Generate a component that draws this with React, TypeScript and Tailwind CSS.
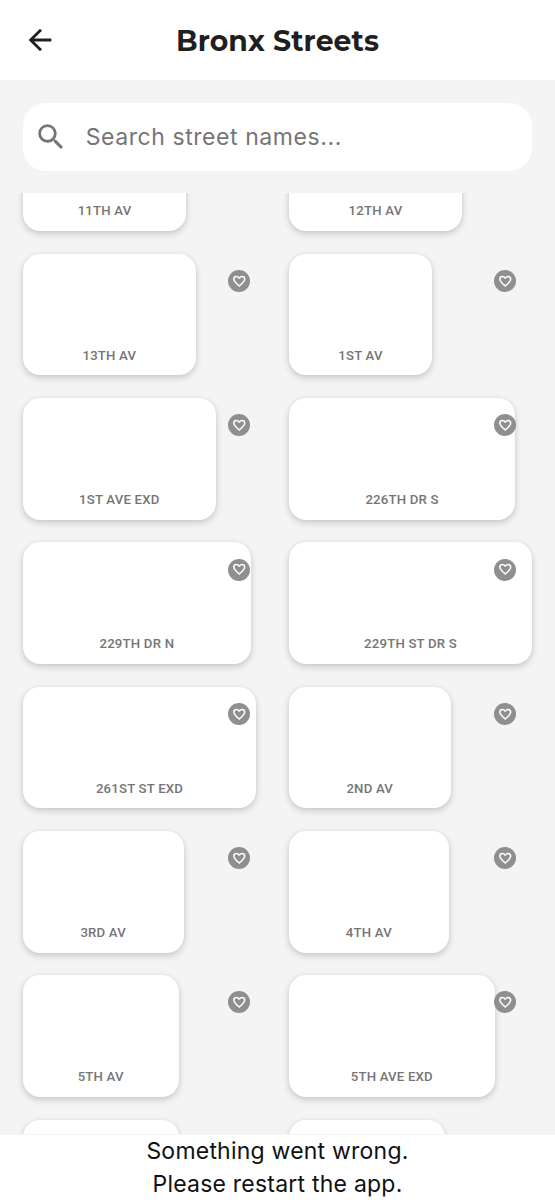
import { MdArrowBack, MdSearch } from "react-icons/md";

type Street = {
  name?: string;
  width: number;
};

const streets: Street[] = [
  { name: "11TH AV", width: 163.7 },
  { name: "12TH AV", width: 173.3 },
  { name: "13TH AV", width: 173.3 },
  { name: "1ST AV", width: 143.3 },
  { name: "1ST AVE EXD", width: 193.3 },
  { name: "226TH DR S", width: 226.5 },
  { name: "229TH DR N", width: 228.3 },
  { name: "229TH ST DR S", width: 243.4 },
  { name: "261ST ST EXD", width: 233.7 },
  { name: "2ND AV", width: 161.8 },
  { name: "3RD AV", width: 161 },
  { name: "4TH AV", width: 160 },
  { name: "5TH AV", width: 156 },
  { name: "5TH AVE EXD", width: 206 },
  // still loading, no name yet
  { width: 156 },
  { width: 156 },
];

function Header() {
  return (
    <header className="relative flex h-20 shrink-0 items-center justify-center bg-white text-[#1f1f1f]">
      <button aria-label="Back" className="absolute left-[22.5px] top-[23px]">
        <MdArrowBack className="size-[34px]" />
      </button>
      <h1 className="pt-[2px] font-[Montserrat,Inter,sans-serif] text-[28.3px] font-bold tracking-[0.1px]">
        Bronx Streets
      </h1>
    </header>
  );
}

function SearchBar() {
  return (
    <div className="mx-[22.7px] mt-[22.5px] flex h-[68px] shrink-0 items-center rounded-[22.7px] bg-white pl-[11px] text-[#757575]">
      <MdSearch className="size-[34px]" />
      <span className="ml-[18px] pt-[2px] text-[23px] tracking-[0.57px]">Search street names...</span>
    </div>
  );
}

function HeartIcon() {
  return (
    <svg viewBox="0 0 24 24" className="size-[14.5px] fill-none stroke-white stroke-[2.5]">
      <path d="M12 19.9C6.2 14.7 3 11.8 3 8.5 3 6 5 4 7.5 4c1.7 0 3.3 1 4 2.6h1C13.200 5 14.800 4 16.500 4 19 4 21 6 21 8.500c0 3.300-3.200 6.200-9 11.400z" />
    </svg>
  );
}

function StreetCard({ street }: { street: Street }) {
  return (
    <div className="relative h-[121.6px]">
      <div
        className="flex h-full items-end justify-center rounded-[17px] bg-white pb-[10.8px] shadow-[0_3px_7px_rgba(0,0,0,0.17),0_0_4px_rgba(0,0,0,0.05)]"
        style={{ width: street.width }}
      >
        {street.name && (
          <span className="font-[Roboto,sans-serif] text-[13.2px] leading-[18px] font-medium tracking-[0.2px] text-[#757575]">
            {street.name}
          </span>
        )}
      </div>
      <button
        aria-label="Save street"
        className="absolute right-[16.2px] top-[16.2px] flex size-[22px] items-center justify-center rounded-full bg-[#8f8f8f]"
      >
        <HeartIcon />
      </button>
    </div>
  );
}

export default function App() {
  return (
    <div className="flex h-[1200px] w-[555px] flex-col overflow-hidden bg-white font-[Inter,sans-serif]">
      <Header />
      <main className="flex h-[1054.5px] shrink-0 flex-col overflow-hidden bg-[#f4f4f4]">
        <SearchBar />
        <div className="mt-[22.7px] h-[941.3px] shrink-0 overflow-hidden px-[22.7px]">
          {/* list is scrolled part way through its first row */}
          <div className="-mt-[83.6px] grid grid-cols-2 gap-[22.7px]">
            {streets.map((street, i) => (
              <StreetCard key={i} street={street} />
            ))}
          </div>
        </div>
      </main>
      <p className="text-center text-[23px] leading-[33px] tracking-[0.22px] text-[#111]">
        Something went wrong.
        <br />
        Please restart the app.
      </p>
    </div>
  );
}
